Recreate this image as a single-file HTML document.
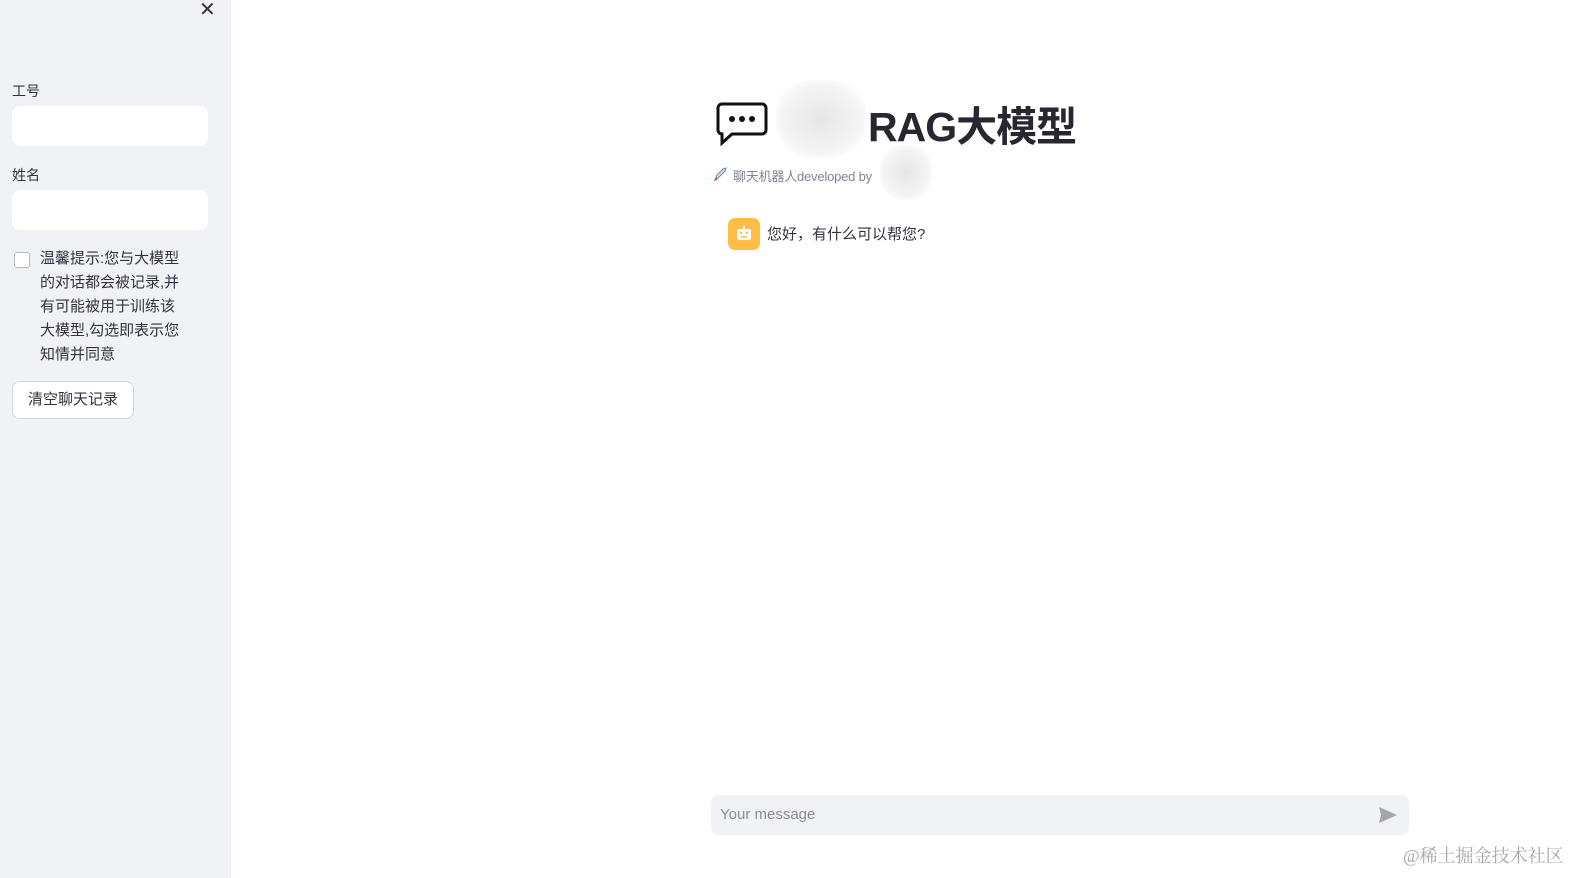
<!DOCTYPE html>
<html><head><meta charset="utf-8">
<style>
*{box-sizing:border-box;margin:0;padding:0}
body{width:1583px;height:878px;overflow:hidden;background:#fff;font-family:"Liberation Sans","Noto Sans CJK SC",sans-serif;color:#31333f;position:relative}
.side{position:absolute;left:0;top:0;width:231px;height:878px;background:#f0f2f6}
.x{position:absolute;left:199px;top:-3px;font-size:20px;color:#31333f}
.lbl{position:absolute;left:12px;font-size:14px;color:#31333f}
.inp{position:absolute;left:12px;width:196px;height:40px;background:#fff;border-radius:8px}
.cb{position:absolute;left:14px;top:252px;width:16px;height:16px;border:1px solid #b8bac2;border-radius:3px;background:#fff}
.cbt{position:absolute;left:40px;top:247px;width:180px;font-size:15px;line-height:24px;color:#31333f;white-space:nowrap}
.btn{position:absolute;left:12px;top:381px;width:122px;height:38px;border:1px solid #d5d7dd;border-radius:8px;background:#fff;font-size:15px;line-height:36px;text-align:center}
.title{position:absolute;left:868px;top:93px;font-size:41px;font-weight:bold;color:#262730;letter-spacing:-1px}
.blob{position:absolute;border-radius:40%;background:radial-gradient(#e6e6e6,#f4f4f4 60%,#fff 80%)}
.sub{position:absolute;left:733px;top:166px;font-size:13px;color:#808495;letter-spacing:-0.2px}
.av{position:absolute;left:728px;top:218px;width:32px;height:32px;border-radius:7px;background:#ffbd45}
.msg{position:absolute;left:767px;top:223px;font-size:15px;color:#31333f}
.chat{position:absolute;left:711px;top:795px;width:698px;height:40px;background:#f0f2f6;border-radius:8px}
.chat span{position:absolute;left:9px;top:11px;font-size:15px;color:#8a8d97}
.wm{position:absolute;left:1403px;top:842px;font-size:18px;color:#a6a8ad;font-family:"Liberation Serif","Noto Serif CJK SC",serif}
</style></head><body>
<div class="side">
<div class="x">✕</div>
<div class="lbl" style="top:81px">工号</div>
<div class="inp" style="top:106px"></div>
<div class="lbl" style="top:165px">姓名</div>
<div class="inp" style="top:190px"></div>
<div class="cb"></div>
<div class="cbt">温馨提示:您与大模型<br>的对话都会被记录,并<br>有可能被用于训练该<br>大模型,勾选即表示您<br>知情并同意</div>
<div class="btn">清空聊天记录</div>
</div>
<svg style="position:absolute;left:716px;top:102px" width="52" height="44" viewBox="0 0 52 44"><path d="M6 2h40a4 4 0 0 1 4 4v22a4 4 0 0 1-4 4H16l-10 9v-9a4 4 0 0 1-4-4V6a4 4 0 0 1 4-4z" fill="#fff" stroke="#111" stroke-width="3"/><circle cx="16" cy="17" r="3" fill="#111"/><circle cx="26" cy="17" r="3" fill="#111"/><circle cx="36" cy="17" r="3" fill="#111"/></svg>
<div class="blob" style="left:776px;top:80px;width:90px;height:78px"></div>
<div class="blob" style="left:880px;top:145px;width:52px;height:55px"></div>
<div class="title">RAG大模型</div>
<svg style="position:absolute;left:712px;top:167px" width="16" height="16" viewBox="0 0 16 16"><path d="M3 13l2-5 6-6 3-1-1 3-6 6z" fill="#dfe6ee" stroke="#6b7f99"/><path d="M3 13l2-2" stroke="#c44" stroke-width="2"/></svg>
<div class="sub">聊天机器人developed by</div>
<div class="av"><svg width="32" height="32" viewBox="0 0 32 32"><rect x="9" y="11" width="14" height="11" rx="2" fill="#fff"/><rect x="12" y="14" width="2" height="2" fill="#ffbd45"/><rect x="18" y="14" width="2" height="2" fill="#ffbd45"/><rect x="13" y="18" width="6" height="1.5" fill="#ffbd45"/><rect x="15" y="8" width="2" height="3" fill="#fff"/></svg></div>
<div class="msg">您好，有什么可以帮您?</div>
<div class="chat"><span>Your message</span>
<svg style="position:absolute;left:668px;top:12px" width="18" height="16" viewBox="0 0 18 16"><path d="M0 0l18 8-18 8 2-8z" fill="#a3a6ae"/></svg></div>
<div class="wm">@稀土掘金技术社区</div>
</body></html>
